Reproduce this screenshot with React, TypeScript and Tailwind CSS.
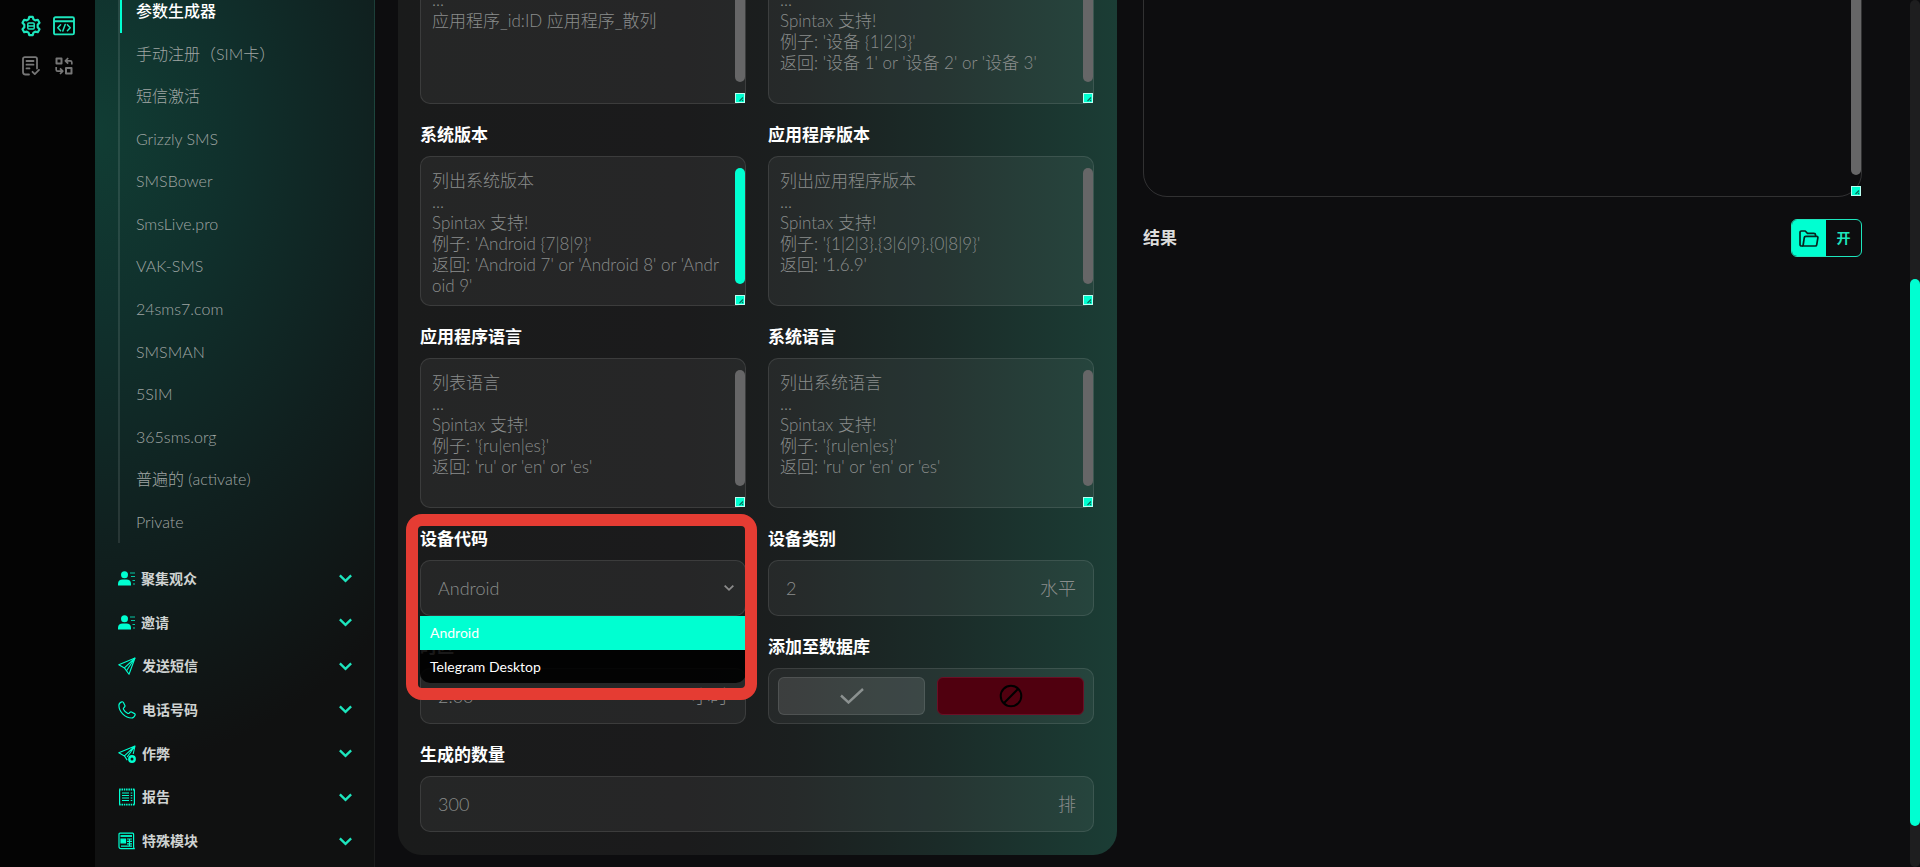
import { useId, type ReactNode } from "react";

const services = [
  "参数生成器",
  "手动注册（SIM卡）",
  "短信激活",
  "Grizzly SMS",
  "SMSBower",
  "SmsLive.pro",
  "VAK-SMS",
  "24sms7.com",
  "SMSMAN",
  "5SIM",
  "365sms.org",
  "普遍的 (activate)",
  "Private",
];

function PersonIcon() {
  return (
    <svg viewBox="0 0 17 15" className="h-[15px] w-[17px]" fill="currentColor">
      <circle cx="6.5" cy="3.7" r="3.5" />
      <path d="M0 14.5v-1.7C0 10 2 8.600 4.500 8.600h4c2.500 0 4.500 1.400 4.500 4.200v1.700z" />
      <path d="M12 1.500h5v1h-5zM13 5h4v1h-4zM14.500 9h2.500v1h-2.500zM15 12.500h2v1h-2z" opacity=".75" />
    </svg>
  );
}

function PlaneIcon() {
  return (
    <svg viewBox="0 0 18 18" className="size-[18px]" fill="none" stroke="currentColor" strokeWidth="1.1" strokeLinejoin="round">
      <path d="M17 1 .8 7.700l5.600 3.200L11 17.200z" />
      <path d="M17 1 6.400 10.900M17 1 8.500 13.700" />
    </svg>
  );
}

function PhoneIcon() {
  return (
    <svg viewBox="0 0 18 18" className="size-[18px]" fill="none" stroke="currentColor" strokeWidth="1.200" strokeLinejoin="round">
      <path d="M3.600.9c.7-.3 1.400 0 1.800.6l1.500 3c.2.6 0 1.100-.4 1.500l-.8.9c-.4.400-.4 1-.1 1.500.8 1.600 2.300 3 3.900 3.900.5.300 1.100.2 1.500-.1l1-.9c.4-.4 1-.5 1.500-.3l3 1.600c.6.4.8 1.100.5 1.700-.6 1.500-1.800 2.700-3.500 2.700C7.300 17 1 10.700.9 4.400.9 2.700 2.100 1.500 3.600.9z" />
    </svg>
  );
}

function PlanePlusIcon() {
  return (
    <svg viewBox="0 0 18 18" className="size-[18px]" fill="none" stroke="currentColor" strokeWidth="1.100" strokeLinejoin="round">
      <path d="M15.200 9 17 1 .8 7.700l5.600 3.200 2.800 4.200M17 1 6.400 10.900M17 1 9.200 12" />
      <circle cx="14" cy="14" r="2.700" strokeWidth="2.400" />
    </svg>
  );
}

function ReportIcon() {
  return (
    <svg viewBox="0 0 18 18" className="size-[18px]" fill="none" stroke="currentColor" strokeWidth="1.200">
      <path d="M1.600 1.600v15M16.400 1.600v15" />
      <path d="M1.200 1.500h15.600M1.200 16.700h15.600" strokeWidth="1.800" strokeDasharray="1.500 .8" />
      <path d="M4 5h7M4 7.500h7M4 10h7M4 12.500h7M12.700 5h1.600M12.700 7.500h1.600M12.700 10h1.600M12.700 12.500h1.600" />
    </svg>
  );
}

function ModuleIcon() {
  return (
    <svg viewBox="0 0 18 18" className="size-[18px]" fill="none" stroke="currentColor" strokeWidth="1.200">
      <path d="M2 1.200h12.600c.7 0 1 .4 1 1V15c0 1 .4 1.600 1.200 1.600H3c-1.300 0-2-.7-2-1.900V2.200c0-.6.4-1 1-1z" />
      <path d="M2.500 4h11.500" strokeWidth="1.800" />
      <path d="M3 7.200h4.500v3.600H3z" fill="currentColor" />
      <path d="M9 7h5M9 9.400h5M9 11.800h5M3 14.200h11M11.500 6.500v8" />
    </svg>
  );
}

const groups: { title: string; icon: ReactNode }[] = [
  { title: "聚集观众", icon: <PersonIcon /> },
  { title: "邀请", icon: <PersonIcon /> },
  { title: "发送短信", icon: <PlaneIcon /> },
  { title: "电话号码", icon: <PhoneIcon /> },
  { title: "作弊", icon: <PlanePlusIcon /> },
  { title: "报告", icon: <ReportIcon /> },
  { title: "特殊模块", icon: <ModuleIcon /> },
];

function Chevron({ className }: { className: string }) {
  return (
    <svg viewBox="0 0 12 8" className={className} fill="none" stroke="currentColor" strokeWidth="2.200">
      <path d="m.8 1.200 5.200 5 5.200-5" />
    </svg>
  );
}

function Rail() {
  return (
    <div className="w-[95px] shrink-0 bg-[#040404] px-[15px] pt-[10px]">
      <div className="grid grid-cols-2 justify-items-center gap-y-2">
        <button aria-label="参数" className="grid size-8 place-items-center text-[#1de5bd]">
          <svg viewBox="0 0 22 22" className="size-[22px]" fill="none" stroke="currentColor" strokeWidth="2.200" strokeLinejoin="round">
            <path d="M9.300 1.900h3.400l.8 2.500 1.700 1 2.600-.6 1.700 2.900L17.700 9.800v2.400l1.800 2.100-1.700 2.900-2.600-.6-1.700 1-.8 2.500H9.300l-.8-2.500-1.700-1-2.600.6-1.700-2.900 1.800-2.100V9.800L2.500 7.700l1.700-2.900 2.600.6 1.700-1z" />
            <rect x="7.800" y="8" width="6.400" height="6" rx="1" strokeWidth="1.500" />
            <path d="M7.500 11h7" strokeWidth="1.500" />
          </svg>
        </button>
        <button aria-label="代码" className="grid size-8 place-items-center text-[#1de5bd]">
          <svg viewBox="0 0 22 20" className="h-[20px] w-[22px]" fill="none" stroke="currentColor" strokeWidth="1.900" strokeLinecap="round" strokeLinejoin="round">
            <rect x="1" y="1.200" width="20" height="17.200" rx="1.500" />
            <path d="M1.500 5.300h19" />
            <path d="M7.600 8.800 4.800 11.800l2.800 3M14.400 8.800l2.800 3-2.800 3M12.200 8.500l-2.400 6.500" strokeWidth="1.500" />
          </svg>
        </button>
        <button aria-label="任务" className="grid size-8 place-items-center text-[#777]">
          <svg viewBox="0 0 20 20" className="size-5" fill="none" stroke="currentColor" strokeWidth="1.800" strokeLinecap="round" strokeLinejoin="round">
            <path d="M8 18.500H4.500a2.500 2.500 0 0 1-2.500-2.500V3a1.800 1.800 0 0 1 1.800-1.800h10.400A1.800 1.800 0 0 1 16 3v9.500" />
            <path d="M5.500 5h7M5.500 8.700h7M5.500 12.400h3M11.500 15.800l2.300 2.300 4.200-4.200" />
          </svg>
        </button>
        <button aria-label="转换" className="grid size-8 place-items-center text-[#777]">
          <svg viewBox="0 0 20 20" className="size-5" fill="none" stroke="currentColor" strokeWidth="2" strokeLinejoin="round">
            <path d="M2.500 2.500h5v5h-5zM12 12h5.500v5.500H12z" />
            <path d="M17.800 8.500V6.300c0-1-.6-1.500-1.500-1.500h-4.500M14.200 2l-2.800 2.800 2.800 2.800M2.200 11v2.700c0 1 .6 1.500 1.500 1.500h4.500M6 12.400l2.800 2.800L6 18" strokeWidth="1.700" />
          </svg>
        </button>
      </div>
    </div>
  );
}

function Sidebar() {
  return (
    <nav className="flex w-[280px] shrink-0 flex-col justify-end overflow-hidden border-r border-white/5 bg-[radial-gradient(ellipse_460px_640px_at_0_130px,#113d34,#10302c_30%,#10201f_64%,#101111)] pr-[22px] pb-1 pl-[23px]">
      <ul className="grid h-[553px] shrink-0 auto-rows-fr border-l-2 border-white/10">
        {services.map((name, i) => (
          <li key={name} className={i === 0 ? "border-l-2 border-[#00ffd1]" : "border-l-2 border-transparent"}>
            <a
              href="#"
              className={
                i === 0
                  ? "flex h-full items-center pl-[14px] text-base font-medium text-white"
                  : "flex h-full items-center pl-[14px] text-base font-light text-[#a0a6a4]"
              }
            >
              {name}
            </a>
          </li>
        ))}
      </ul>
      <div className="mt-[14px] grid h-[306px] shrink-0 auto-rows-fr">
        {groups.map((g) => (
          <button key={g.title} className="flex items-center text-[#00ffd1]">
            {g.icon}
            <span className="ml-[6px] text-sm font-bold text-[#cfd3d2]">{g.title}</span>
            <Chevron className="ml-auto h-[9px] w-[13px] text-[#1de5bd]" />
          </button>
        ))}
      </div>
    </nav>
  );
}

function ScrollThumb({ active }: { active?: boolean }) {
  return (
    <>
      <span
        className={
          active
            ? "absolute top-3 right-px bottom-[22px] w-[10px] rounded-full bg-[#00ffd1]"
            : "absolute top-3 right-px bottom-[22px] w-[10px] rounded-full bg-[#666667]"
        }
      />
      <span className="absolute right-px bottom-px size-[10px] border border-[#b8fff1] bg-[#00ffd1]">
        <svg viewBox="0 0 8 8" className="size-2" stroke="#0a6a59" strokeWidth="1.200">
          <path d="M3.500 7 7 3.500M6 7l1-1" />
        </svg>
      </span>
    </>
  );
}

const labelClass = "mb-[9px] block text-[17px] leading-6 font-bold text-white";
const boxClass = "rounded-[10px] border border-white/10 bg-white/5";

function AreaField({ label, hint, active }: { label: string; hint: string[]; active?: boolean }) {
  const id = useId();
  return (
    <div>
      <label htmlFor={id} className={labelClass}>
        {label}
      </label>
      <div className="relative">
        <textarea
          id={id}
          placeholder={hint.join("\n")}
          className={`${boxClass} block h-[150px] w-full resize-none overflow-hidden py-[13px] pr-[23px] pl-[11px] text-[17px] leading-[21px] font-light break-all text-white placeholder:text-[#8a8d8c]`}
        />
        <ScrollThumb active={active} />
      </div>
    </div>
  );
}

function UnitField({ label, value, unit }: { label: string; value: string; unit: string }) {
  const id = useId();
  return (
    <div>
      <label htmlFor={id} className={labelClass}>
        {label}
      </label>
      <div className={`${boxClass} flex h-14 items-center px-[17px] text-[#8a8d8c]`}>
        <input id={id} placeholder={value} className="min-w-0 flex-1 text-lg font-light outline-none placeholder:text-[#8a8d8c]" />
        <span className="text-lg font-light">{unit}</span>
      </div>
    </div>
  );
}

function DeviceSelect() {
  return (
    <div className="relative">
      <label htmlFor="device" className={labelClass}>
        设备代码
      </label>
      <div className="relative">
        <select
          id="device"
          className={`${boxClass} block h-14 w-full appearance-none px-[17px] text-lg font-light text-[#8a8d8c]`}
        >
          <option>Android</option>
          <option>Telegram Desktop</option>
        </select>
        <Chevron className="absolute top-6 right-3 h-2 w-[10px] text-[#8b8b8b]" />
        <ul className="absolute inset-x-0 top-full z-10 overflow-hidden rounded-b-[10px] bg-black/90 text-sm text-white">
          <li className="flex h-[34px] items-center bg-[#00ffd1] px-[10px]">Android</li>
          <li className="flex h-[33px] items-center px-[10px]">Telegram Desktop</li>
        </ul>
      </div>
      <div className="pointer-events-none absolute -top-[13px] -right-[11px] -left-[14px] z-20 h-[186px] rounded-2xl border-12 border-[#e53c33]" />
    </div>
  );
}

function SaveToggle() {
  return (
    <div>
      <span className={labelClass}>添加至数据库</span>
      <div className={`${boxClass} grid h-14 grid-cols-2 gap-3 px-[9px] py-2`}>
        <button aria-label="是" className="grid place-items-center rounded-md border border-white/10 bg-white/10 text-[#8b9190]">
          <svg viewBox="0 0 24 16" className="h-4 w-6" fill="none" stroke="currentColor" strokeWidth="2.400">
            <path d="m1 7.500 7.500 7L23 1" />
          </svg>
        </button>
        <button aria-label="否" className="grid place-items-center rounded-md border border-[#6a1026] bg-[#50000f] text-black">
          <svg viewBox="0 0 24 24" className="size-6" fill="none" stroke="currentColor" strokeWidth="2">
            <circle cx="12" cy="12" r="10.300" />
            <path d="M19.200 4.800 4.800 19.200" />
          </svg>
        </button>
      </div>
    </div>
  );
}

function Generator() {
  return (
    <form className="shrink-0 rounded-3xl bg-[linear-gradient(90deg,#1a1b1b,#1b1b1c_40%,#1b1f1f_55%,#1b2b28_75%,#1b3d35)] p-[22px] pr-[23px] pb-[23px]">
      <div className="grid grid-cols-2 gap-x-[22px] gap-y-[19px]">
        <AreaField label="应用程序" hint={["列出应用程序", "...", "应用程序_id:ID 应用程序_散列"]} />
        <AreaField
          label="设备"
          hint={["列出设备", "...", "Spintax 支持!", "例子: '设备 {1|2|3}'", "返回: '设备 1' or '设备 2' or '设备 3'"]}
        />
        <AreaField
          label="系统版本"
          active
          hint={["列出系统版本", "...", "Spintax 支持!", "例子: 'Android {7|8|9}'", "返回: 'Android 7' or 'Android 8' or 'Android 9'"]}
        />
        <AreaField
          label="应用程序版本"
          hint={["列出应用程序版本", "...", "Spintax 支持!", "例子: '{1|2|3}.{3|6|9}.{0|8|9}'", "返回: '1.6.9'"]}
        />
        <AreaField
          label="应用程序语言"
          hint={["列表语言", "...", "Spintax 支持!", "例子: '{ru|en|es}'", "返回: 'ru' or 'en' or 'es'"]}
        />
        <AreaField
          label="系统语言"
          hint={["列出系统语言", "...", "Spintax 支持!", "例子: '{ru|en|es}'", "返回: 'ru' or 'en' or 'es'"]}
        />
        <DeviceSelect />
        <UnitField label="设备类别" value="2" unit="水平" />
        <UnitField label="时区" value="2.00" unit="小时" />
        <SaveToggle />
        <div className="col-span-2">
          <UnitField label="生成的数量" value="300" unit="排" />
        </div>
      </div>
    </form>
  );
}

function Results() {
  return (
    <section className="min-w-0">
      <div className="relative -mt-6">
        <textarea
          aria-label="日志"
          readOnly
          className="block h-[221px] w-full resize-none overflow-hidden rounded-3xl border border-white/15 bg-transparent"
        />
        <ScrollThumb />
      </div>
      <div className="mt-[22px] flex items-center justify-between">
        <h2 className="text-[17px] font-bold text-[#dcdcdc]">结果</h2>
        <button className="flex h-[38px] w-[71px] overflow-hidden rounded-md border border-[#1de5bd]">
          <span className="grid w-[34px] place-items-center bg-[#00ffd1]">
            <svg viewBox="0 0 20 17" className="h-[17px] w-5" fill="none" stroke="#07251f" strokeWidth="1.700" strokeLinejoin="round">
              <path d="M4 16H2.500C1.600 16 1 15.400 1 14.500V2.500C1 1.600 1.600 1 2.500 1h3.700l2.300 2.300h6.300c1 0 1.700.6 1.700 1.500v1.500" />
              <path d="M6.700 6.400h11.100c.8 0 1.200.5 1.100 1.200l-1.200 7.200c-.1.700-.6 1.200-1.400 1.200H4l1.300-8.500c.1-.7.600-1.100 1.400-1.100z" />
            </svg>
          </span>
          <span className="grid flex-1 place-items-center text-sm font-bold text-[#1de5bd]">开</span>
        </button>
      </div>
    </section>
  );
}

export default function App() {
  return (
    <div className="relative flex h-screen overflow-hidden bg-[#0d0d0f] font-['Lato','Noto_Sans_CJK_SC',sans-serif]">
      <Rail />
      <Sidebar />
      <main className="grid min-w-0 flex-1 grid-cols-2 gap-x-[26px] overflow-hidden pr-[58px] pl-[23px]">
        <div className="flex h-screen min-w-0 flex-col justify-end pb-3">
          <Generator />
        </div>
        <Results />
      </main>
      <div className="absolute inset-y-0 right-0 w-[10px] rounded-full bg-[#1e1e1f]">
        <div className="mt-[279px] h-[547px] rounded-full bg-[#00ffd1]" />
      </div>
    </div>
  );
}
